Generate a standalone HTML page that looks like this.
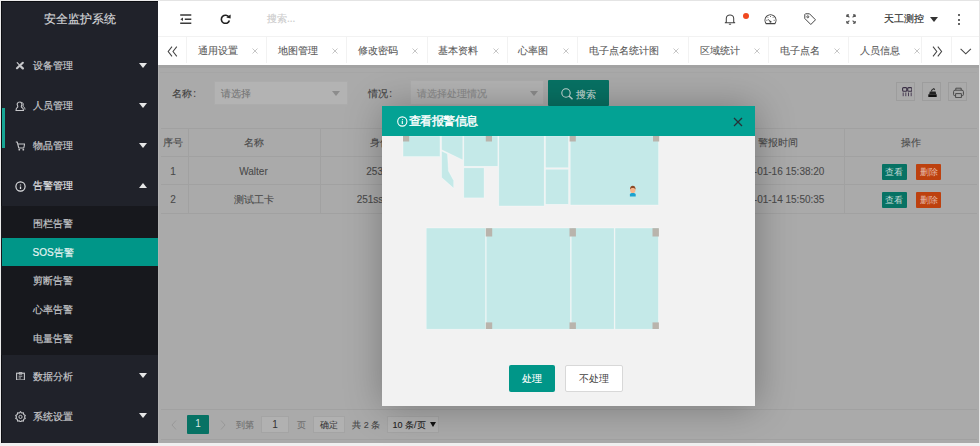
<!DOCTYPE html>
<html><head><meta charset="utf-8">
<style>
*{margin:0;padding:0;box-sizing:border-box}
html,body{width:980px;height:446px;overflow:hidden;background:#ececec;font-family:"Liberation Sans",sans-serif;position:relative}
.a{position:absolute}
.t{position:absolute;line-height:12px;white-space:nowrap}
</style></head><body>
<div class="a" style="left:1px;top:1px;width:157px;height:442px;background:#20222a"></div>
<div class="a" style="left:1px;top:1px;width:1px;height:442px;background:#0d0e12"></div>
<div class="a" style="left:1px;top:1px;width:157px;height:1px;background:#0d0e12"></div>
<span class="t" style="left:-70px;top:12.5px;width:300px;text-align:center;font-size:11.5px;color:#d4d5d8;-webkit-text-stroke:0.18px currentColor;">安全监护系统</span>
<span class="t" style="left:32.5px;top:60px;font-size:10px;color:#c6c7ca;-webkit-text-stroke:0.18px currentColor;">设备管理</span>
<span class="t" style="left:32.5px;top:100px;font-size:10px;color:#c6c7ca;-webkit-text-stroke:0.18px currentColor;">人员管理</span>
<span class="t" style="left:32.5px;top:140px;font-size:10px;color:#c6c7ca;-webkit-text-stroke:0.18px currentColor;">物品管理</span>
<span class="t" style="left:32.5px;top:180px;font-size:10px;color:#e2e3e5;-webkit-text-stroke:0.18px currentColor;">告警管理</span>
<span class="a" style="left:138.5px;top:63px;width:0;height:0;border-left:4.5px solid transparent;border-right:4.5px solid transparent;border-top:5px solid #e6e6e6"></span>
<span class="a" style="left:138.5px;top:103px;width:0;height:0;border-left:4.5px solid transparent;border-right:4.5px solid transparent;border-top:5px solid #e6e6e6"></span>
<span class="a" style="left:138.5px;top:143px;width:0;height:0;border-left:4.5px solid transparent;border-right:4.5px solid transparent;border-top:5px solid #e6e6e6"></span>
<span class="a" style="left:138.5px;top:373px;width:0;height:0;border-left:4.5px solid transparent;border-right:4.5px solid transparent;border-top:5px solid #e6e6e6"></span>
<span class="a" style="left:138.5px;top:413px;width:0;height:0;border-left:4.5px solid transparent;border-right:4.5px solid transparent;border-top:5px solid #e6e6e6"></span>
<span class="a" style="left:138.5px;top:183px;width:0;height:0;border-left:4.5px solid transparent;border-right:4.5px solid transparent;border-bottom:5px solid #e6e6e6"></span>
<svg class="a" style="left:15px;top:61px" width="10" height="9" viewBox="0 0 10 9"><path d="M2 7.2L7.8 1.8" stroke="#c6c7ca" stroke-width="2.2" stroke-linecap="round"/><path d="M2.2 1.6L4.3 3.8" stroke="#c6c7ca" stroke-width="1.2" stroke-linecap="round"/><path d="M5.6 5.2L7.8 7.4" stroke="#c6c7ca" stroke-width="2.3" stroke-linecap="round"/></svg>
<svg class="a" style="left:14.5px;top:100.5px" width="11" height="10.5" viewBox="0 0 11 10.5"><path d="M4.5 1A2.3 2.3 0 0 0 2.6 4.6C2.9 5.4 3 5.8 2.5 6.3C1.5 6.8 1 7.5 1 9.5H8.5C8.5 7.5 7.7 6.8 6.6 6.3C6.1 5.8 6.2 5.4 6.5 4.6A2.3 2.3 0 0 0 4.5 1Z" stroke="#c6c7ca" stroke-width="1.1" fill="none"/><path d="M6.3 1.4C8.3 1.4 8.8 3.5 7.8 5.2C9 5.8 9.8 6.6 10 8.6" stroke="#c6c7ca" stroke-width="1" fill="none"/></svg>
<svg class="a" style="left:14.5px;top:140.5px" width="10.5" height="10" viewBox="0 0 10.5 10"><path d="M0.8 1H2.2L3.8 7H8.8L9.6 3H3" stroke="#c6c7ca" stroke-width="1.1" fill="none" stroke-linejoin="round"/><circle cx="4.3" cy="8.7" r="0.9" fill="#c6c7ca"/><circle cx="8.3" cy="8.7" r="0.9" fill="#c6c7ca"/></svg>
<svg class="a" style="left:14.5px;top:180.8px" width="11" height="11" viewBox="0 0 11 11"><circle cx="5.5" cy="5.5" r="4.6" stroke="#e2e3e5" stroke-width="1.15" fill="none"/><path d="M5.5 3.6V4.5M5.5 5.4V7.9" stroke="#e2e3e5" stroke-width="1.3"/></svg>
<div class="a" style="left:1px;top:206px;width:157px;height:149px;background:#17181d"></div>
<div class="a" style="left:2px;top:237.7px;width:156px;height:28.6px;background:#009688"></div>
<span class="t" style="left:32.5px;top:218.2px;font-size:10px;color:#c6c7ca;-webkit-text-stroke:0.18px currentColor;">围栏告警</span>
<span class="t" style="left:32.5px;top:246.7px;font-size:10px;color:#e6f4f2;-webkit-text-stroke:0.18px currentColor;">SOS告警</span>
<span class="t" style="left:32.5px;top:275.3px;font-size:10px;color:#c6c7ca;-webkit-text-stroke:0.18px currentColor;">剪断告警</span>
<span class="t" style="left:32.5px;top:303.5px;font-size:10px;color:#c6c7ca;-webkit-text-stroke:0.18px currentColor;">心率告警</span>
<span class="t" style="left:32.5px;top:332.5px;font-size:10px;color:#c6c7ca;-webkit-text-stroke:0.18px currentColor;">电量告警</span>
<span class="t" style="left:32.5px;top:370.8px;font-size:10px;color:#c6c7ca;-webkit-text-stroke:0.18px currentColor;">数据分析</span>
<span class="t" style="left:32.5px;top:410.7px;font-size:10px;color:#c6c7ca;-webkit-text-stroke:0.18px currentColor;">系统设置</span>
<svg class="a" style="left:15.5px;top:371.8px" width="9" height="8.6" viewBox="0 0 9 8.6"><rect x="0.6" y="1.2" width="7.8" height="6.8" stroke="#c6c7ca" stroke-width="1.1" fill="none"/><path d="M3 0.6H6V2.2H3ZM2.6 4.2H6.4M2.6 6H5" stroke="#c6c7ca" stroke-width="0.9" fill="none"/></svg>
<svg class="a" style="left:14.5px;top:411px" width="11" height="11" viewBox="0 0 11 11"><path d="M5.5 0.6L6.6 2L8.4 1.7L8.7 3.5L10.3 4.4L9.5 6L10.3 7.5L8.7 8.3L8.4 10.1L6.6 9.8L5.5 11.2L4.4 9.8L2.6 10.1L2.3 8.3L0.7 7.5L1.5 6L0.7 4.4L2.3 3.5L2.6 1.7L4.4 2Z" stroke="#c6c7ca" stroke-width="1.1" fill="none" stroke-linejoin="round"/><circle cx="5.5" cy="5.9" r="1.6" stroke="#c6c7ca" stroke-width="1" fill="none"/></svg>
<div class="a" style="left:2px;top:107.8px;width:3px;height:40.2px;background:#16a594"></div>
<div class="a" style="left:158px;top:1px;width:821px;height:35px;background:#fff"></div>
<div class="a" style="left:158px;top:0px;width:821px;height:1px;background:#e4e4e4"></div>
<svg class="a" style="left:180px;top:14px" width="11.5" height="10" viewBox="0 0 11.5 10"><path d="M0.2 1H11.3M4.8 5.2H11.3M0.2 9.2H11.3" stroke="#3a3a3a" stroke-width="1.35"/><path d="M0.4 5.2L3 3.4V7Z" fill="#3a3a3a"/></svg>
<svg class="a" style="left:220px;top:14px" width="11" height="10" viewBox="0 0 11 10"><path d="M9 3.2A4.1 4.1 0 1 0 9.4 6.5" stroke="#222" stroke-width="1.6" fill="none"/><path d="M6.3 3.6L10.6 0.6V4.6Z" fill="#222"/></svg>
<span class="t" style="left:267px;top:13px;font-size:10px;color:#cdcdcd;-webkit-text-stroke:0.18px currentColor;">搜索...</span>
<svg class="a" style="left:724px;top:13px" width="12" height="12" viewBox="0 0 12 12"><path d="M2.3 9V5.6A3.7 3.7 0 0 1 9.7 5.6V9L10.8 9.8H1.2Z" stroke="#444" stroke-width="1.05" fill="none" stroke-linejoin="round"/><path d="M4.9 11.2H7.1" stroke="#444" stroke-width="1"/></svg>
<div class="a" style="left:743.4px;top:13.3px;width:6px;height:5.7px;background:#f0481f;border-radius:3px"></div>
<svg class="a" style="left:763.5px;top:14px" width="13" height="11" viewBox="0 0 13 11"><path d="M2.1 9.6A5.5 5.5 0 1 1 10.9 9.6Z" stroke="#444" stroke-width="1.05" fill="none" stroke-linejoin="round"/><path d="M6.5 7.8L4 5.2M2.4 6.3H3.3M3.6 3.2L4.2 3.8M6.5 1.9V2.8M9.4 3.2L8.8 3.8M10.6 6.3H9.7" stroke="#444" stroke-width="1"/><circle cx="6.5" cy="7.8" r="1" fill="#444"/></svg>
<svg class="a" style="left:803.5px;top:12.5px" width="12.5" height="12.5" viewBox="0 0 12.5 12.5"><path d="M0.8 1.5V5.5L6.8 11.5L11.5 6.8L5.5 0.8H1.5Z" stroke="#444" stroke-width="1" fill="none" stroke-linejoin="round"/><circle cx="3.8" cy="3.8" r="1" stroke="#444" stroke-width=".9" fill="none"/></svg>
<svg class="a" style="left:845.5px;top:14px" width="10" height="10" viewBox="0 0 10 10"><path d="M0.8 0.8L3.4 3.4M0.8 0.8V3M0.8 0.8H3M9.2 0.8L6.6 3.4M9.2 0.8V3M9.2 0.8H7M0.8 9.2L3.4 6.6M0.8 9.2V7M0.8 9.2H3M9.2 9.2L6.6 6.6M9.2 9.2V7M9.2 9.2H7" stroke="#555" stroke-width="1.15" fill="none"/></svg>
<span class="t" style="left:884.3px;top:12.5px;font-size:10.2px;color:#333;-webkit-text-stroke:0.18px currentColor;">天工测控</span>
<span class="a" style="left:929.5px;top:16.5px;width:0;height:0;border-left:4px solid transparent;border-right:4px solid transparent;border-top:5px solid #333"></span>
<div class="a" style="left:958px;top:14.3px;width:2.2px;height:2.2px;background:#333;border-radius:1px"></div>
<div class="a" style="left:958px;top:18.6px;width:2.2px;height:2.2px;background:#333;border-radius:1px"></div>
<div class="a" style="left:958px;top:22.9px;width:2.2px;height:2.2px;background:#333;border-radius:1px"></div>
<div class="a" style="left:158px;top:36px;width:821px;height:29px;background:#fff"></div>
<div class="a" style="left:158px;top:36px;width:821px;height:1px;background:#f2f2f2"></div>
<svg class="a" style="left:167px;top:45.5px" width="11" height="11" viewBox="0 0 11 11"><path d="M5 0.7L1.2 5.5L5 10.3M9.8 0.7L6 5.5L9.8 10.3" stroke="#444" stroke-width="1.05" fill="none"/></svg>
<span class="t" style="left:197.9px;top:45px;font-size:10px;color:#5a5a5a;-webkit-text-stroke:0.1px currentColor">通用设置</span>
<svg class="a" style="left:251.8px;top:48.1px" width="6" height="6" viewBox="0 0 6 6"><path d="M0.5 0.5L5.5 5.5M5.5 0.5L0.5 5.5" stroke="#c0c0c0" stroke-width="0.9"/></svg>
<span class="t" style="left:278.1px;top:45px;font-size:10px;color:#5a5a5a;-webkit-text-stroke:0.1px currentColor">地图管理</span>
<svg class="a" style="left:332px;top:48.1px" width="6" height="6" viewBox="0 0 6 6"><path d="M0.5 0.5L5.5 5.5M5.5 0.5L0.5 5.5" stroke="#c0c0c0" stroke-width="0.9"/></svg>
<span class="t" style="left:358.3px;top:45px;font-size:10px;color:#5a5a5a;-webkit-text-stroke:0.1px currentColor">修改密码</span>
<svg class="a" style="left:412.3px;top:48.1px" width="6" height="6" viewBox="0 0 6 6"><path d="M0.5 0.5L5.5 5.5M5.5 0.5L0.5 5.5" stroke="#c0c0c0" stroke-width="0.9"/></svg>
<span class="t" style="left:438.3px;top:45px;font-size:10px;color:#5a5a5a;-webkit-text-stroke:0.1px currentColor">基本资料</span>
<svg class="a" style="left:492.8px;top:48.1px" width="6" height="6" viewBox="0 0 6 6"><path d="M0.5 0.5L5.5 5.5M5.5 0.5L0.5 5.5" stroke="#c0c0c0" stroke-width="0.9"/></svg>
<span class="t" style="left:518.3px;top:45px;font-size:10px;color:#5a5a5a;-webkit-text-stroke:0.1px currentColor">心率图</span>
<svg class="a" style="left:563.1px;top:48.1px" width="6" height="6" viewBox="0 0 6 6"><path d="M0.5 0.5L5.5 5.5M5.5 0.5L0.5 5.5" stroke="#c0c0c0" stroke-width="0.9"/></svg>
<span class="t" style="left:589.1px;top:45px;font-size:10px;color:#5a5a5a;-webkit-text-stroke:0.1px currentColor">电子点名统计图</span>
<svg class="a" style="left:673.4px;top:48.1px" width="6" height="6" viewBox="0 0 6 6"><path d="M0.5 0.5L5.5 5.5M5.5 0.5L0.5 5.5" stroke="#c0c0c0" stroke-width="0.9"/></svg>
<span class="t" style="left:699.7px;top:45px;font-size:10px;color:#5a5a5a;-webkit-text-stroke:0.1px currentColor">区域统计</span>
<svg class="a" style="left:753.7px;top:48.1px" width="6" height="6" viewBox="0 0 6 6"><path d="M0.5 0.5L5.5 5.5M5.5 0.5L0.5 5.5" stroke="#c0c0c0" stroke-width="0.9"/></svg>
<span class="t" style="left:779.7px;top:45px;font-size:10px;color:#5a5a5a;-webkit-text-stroke:0.1px currentColor">电子点名</span>
<svg class="a" style="left:833.7px;top:48.1px" width="6" height="6" viewBox="0 0 6 6"><path d="M0.5 0.5L5.5 5.5M5.5 0.5L0.5 5.5" stroke="#c0c0c0" stroke-width="0.9"/></svg>
<span class="t" style="left:859.7px;top:45px;font-size:10px;color:#5a5a5a;-webkit-text-stroke:0.1px currentColor">人员信息</span>
<svg class="a" style="left:914.2px;top:48.1px" width="6" height="6" viewBox="0 0 6 6"><path d="M0.5 0.5L5.5 5.5M5.5 0.5L0.5 5.5" stroke="#c0c0c0" stroke-width="0.9"/></svg>
<div class="a" style="left:186px;top:37px;width:1px;height:26px;background:#f2f2f2"></div>
<div class="a" style="left:266px;top:37px;width:1px;height:26px;background:#f2f2f2"></div>
<div class="a" style="left:346px;top:37px;width:1px;height:26px;background:#f2f2f2"></div>
<div class="a" style="left:427px;top:37px;width:1px;height:26px;background:#f2f2f2"></div>
<div class="a" style="left:507px;top:37px;width:1px;height:26px;background:#f2f2f2"></div>
<div class="a" style="left:577px;top:37px;width:1px;height:26px;background:#f2f2f2"></div>
<div class="a" style="left:688px;top:37px;width:1px;height:26px;background:#f2f2f2"></div>
<div class="a" style="left:768px;top:37px;width:1px;height:26px;background:#f2f2f2"></div>
<div class="a" style="left:848px;top:37px;width:1px;height:26px;background:#f2f2f2"></div>
<div class="a" style="left:921px;top:37px;width:1px;height:26px;background:#f2f2f2"></div>
<div class="a" style="left:951px;top:37px;width:1px;height:26px;background:#f2f2f2"></div>
<svg class="a" style="left:932px;top:45.5px" width="10.5" height="11" viewBox="0 0 10.5 11"><path d="M1 0.7L4.8 5.5L1 10.3M5.8 0.7L9.6 5.5L5.8 10.3" stroke="#444" stroke-width="1.05" fill="none"/></svg>
<svg class="a" style="left:960px;top:47.5px" width="11.5" height="7" viewBox="0 0 11.5 7"><path d="M0.6 0.8L5.75 5.8L10.9 0.8" stroke="#444" stroke-width="1.1" fill="none"/></svg>
<div class="a" style="left:158px;top:65px;width:821px;height:378px;background:#aaaaaa"></div>
<div class="a" style="left:158px;top:65px;width:821px;height:2.5px;background:#a3a3a3"></div>
<div class="a" style="left:158px;top:65px;width:1px;height:378px;background:#b1b1b1"></div>
<div class="a" style="left:160px;top:71.5px;width:817px;height:1px;background:#a6a6a6"></div>
<span class="t" style="left:171.5px;top:88px;font-size:10px;color:#3f3f3f;-webkit-text-stroke:0.1px currentColor;">名称</span>
<span class="t" style="left:193.3px;top:88px;font-size:10px;color:#3f3f3f;-webkit-text-stroke:0.1px currentColor;">:</span>
<div class="a" style="left:213.5px;top:80.8px;width:134.5px;height:24.5px;background:#b3b3b3;border:1px solid #acacac"></div>
<span class="t" style="left:220.5px;top:88px;font-size:10px;color:#757575;-webkit-text-stroke:0.1px currentColor;">请选择</span>
<span class="a" style="left:332px;top:91px;width:0;height:0;border-left:4.5px solid transparent;border-right:4.5px solid transparent;border-top:5px solid #8c8c8c"></span>
<span class="t" style="left:367.5px;top:88px;font-size:10px;color:#3f3f3f;-webkit-text-stroke:0.1px currentColor;">情况</span>
<span class="t" style="left:389.3px;top:88px;font-size:10px;color:#3f3f3f;-webkit-text-stroke:0.1px currentColor;">:</span>
<div class="a" style="left:409.8px;top:80.3px;width:134.7px;height:24.5px;background:#b3b3b3;border:1px solid #acacac"></div>
<span class="t" style="left:416.5px;top:88px;font-size:10px;color:#8a8a8a;-webkit-text-stroke:0.1px currentColor;">请选择处理情况</span>
<span class="a" style="left:529.5px;top:91px;width:0;height:0;border-left:4.25px solid transparent;border-right:4.25px solid transparent;border-top:5px solid #8c8c8c"></span>
<div class="a" style="left:548px;top:79.7px;width:60.7px;height:26.3px;background:#077264;border-radius:1px"></div>
<svg class="a" style="left:561px;top:87.5px" width="12.5" height="12" viewBox="0 0 12.5 12"><circle cx="5" cy="5" r="4.2" stroke="#c6dad6" stroke-width="1.1" fill="none"/><path d="M8 8L11.5 11.3" stroke="#c6dad6" stroke-width="1.5"/></svg>
<span class="t" style="left:576px;top:88.5px;font-size:10px;color:#c9dcd8;-webkit-text-stroke:0.1px currentColor;">搜索</span>
<div class="a" style="left:896px;top:82.4px;width:19px;height:19px;border:1px solid #9d9d9d"></div>
<div class="a" style="left:922px;top:82.4px;width:19px;height:19px;border:1px solid #9d9d9d"></div>
<div class="a" style="left:948px;top:82.4px;width:19px;height:19px;border:1px solid #9d9d9d"></div>
<svg class="a" style="left:901.5px;top:87px" width="10.5" height="9.5" viewBox="0 0 10.5 9.5"><rect x="0.6" y="0.6" width="4.2" height="3.6" rx="1" stroke="#3a2f45" stroke-width="1.1" fill="none"/><rect x="5.7" y="0.6" width="4.2" height="3.6" rx="1" stroke="#3a2f45" stroke-width="1.1" fill="none"/><path d="M1.2 5.5V9.2M3.8 5.5V9.2M6.5 5.5V9.2M9.2 5.5V9.2" stroke="#4a3f55" stroke-width="1"/></svg>
<svg class="a" style="left:927.5px;top:87.5px" width="9" height="9" viewBox="0 0 9 9"><path d="M0.3 6.3H8.7V9H0.3Z" fill="#111"/><path d="M1.2 6.3L1.8 3.6H7.6L8.2 6.3Z" fill="#222"/><path d="M3.6 3.6V2.2L5.8 0.6L6.8 1.8" stroke="#333" stroke-width="1.1" fill="none"/></svg>
<svg class="a" style="left:952.5px;top:86.5px" width="11" height="11.5" viewBox="0 0 11 11.5"><path d="M2.8 3.2V1.2H8.2V3.2M2.6 8.6H1.6A1 1 0 0 1 0.6 7.6V4.6A1.4 1.4 0 0 1 2 3.2H9A1.4 1.4 0 0 1 10.4 4.6V7.6A1 1 0 0 1 9.4 8.6H8.4M2.6 6.6H8.4V10.6H2.6Z" stroke="#4a4a4a" stroke-width="1" fill="none"/></svg>
<div class="a" style="left:161px;top:128px;width:816px;height:1px;background:#a1a1a1"></div>
<div class="a" style="left:161px;top:156px;width:816px;height:1px;background:#a1a1a1"></div>
<div class="a" style="left:161px;top:184px;width:816px;height:1px;background:#a1a1a1"></div>
<div class="a" style="left:161px;top:212.5px;width:816px;height:1px;background:#a1a1a1"></div>
<div class="a" style="left:188px;top:128.5px;width:1px;height:84.5px;background:#a1a1a1"></div>
<div class="a" style="left:319.5px;top:128.5px;width:1px;height:84.5px;background:#a1a1a1"></div>
<div class="a" style="left:711px;top:128.5px;width:1px;height:84.5px;background:#a1a1a1"></div>
<div class="a" style="left:843.5px;top:128.5px;width:1px;height:84.5px;background:#a1a1a1"></div>
<span class="t" style="left:369.5px;top:137px;font-size:10px;color:#4a4a4a;-webkit-text-stroke:0.1px currentColor;">身份证号</span>
<span class="t" style="left:23px;top:137px;width:300px;text-align:center;font-size:10px;color:#4a4a4a;-webkit-text-stroke:0.1px currentColor;">序号</span>
<span class="t" style="left:103.5px;top:137px;width:300px;text-align:center;font-size:10px;color:#4a4a4a;-webkit-text-stroke:0.1px currentColor;">名称</span>
<span class="t" style="left:628px;top:137px;width:300px;text-align:center;font-size:10px;color:#4a4a4a;-webkit-text-stroke:0.1px currentColor;">警报时间</span>
<span class="t" style="left:761px;top:137px;width:300px;text-align:center;font-size:10px;color:#4a4a4a;-webkit-text-stroke:0.1px currentColor;">操作</span>
<span class="t" style="left:366.3px;top:166px;font-size:10px;color:#4a4a4a;-webkit-text-stroke:0.1px currentColor;">2530000000000</span>
<span class="t" style="left:23px;top:166px;width:300px;text-align:center;font-size:10px;color:#4a4a4a;-webkit-text-stroke:0.1px currentColor;">1</span>
<span class="t" style="left:103.5px;top:166px;width:300px;text-align:center;font-size:10px;color:#4a4a4a;-webkit-text-stroke:0.1px currentColor;">Walter</span>
<span class="t" style="left:628px;top:166px;width:300px;text-align:center;font-size:10px;color:#4a4a4a;-webkit-text-stroke:0.1px currentColor;">2025-01-16 15:38:20</span>
<span class="t" style="left:356.7px;top:194px;font-size:10px;color:#4a4a4a;-webkit-text-stroke:0.1px currentColor;">251ss00000000</span>
<span class="t" style="left:23px;top:194px;width:300px;text-align:center;font-size:10px;color:#4a4a4a;-webkit-text-stroke:0.1px currentColor;">2</span>
<span class="t" style="left:103.5px;top:194px;width:300px;text-align:center;font-size:10px;color:#4a4a4a;-webkit-text-stroke:0.1px currentColor;">测试工卡</span>
<span class="t" style="left:628px;top:194px;width:300px;text-align:center;font-size:10px;color:#4a4a4a;-webkit-text-stroke:0.1px currentColor;">2025-01-14 15:50:35</span>
<div class="a" style="left:881.6px;top:163.7px;width:25px;height:16px;background:#077264;border-radius:1px;color:#c6dcd8;font-size:9px;line-height:16px;text-align:center">查看</div>
<div class="a" style="left:916px;top:163.7px;width:25px;height:16px;background:#bd410f;border-radius:1px;color:#e6b9a5;font-size:9px;line-height:16px;text-align:center">删除</div>
<div class="a" style="left:881.6px;top:191.8px;width:25px;height:16px;background:#077264;border-radius:1px;color:#c6dcd8;font-size:9px;line-height:16px;text-align:center">查看</div>
<div class="a" style="left:916px;top:191.8px;width:25px;height:16px;background:#bd410f;border-radius:1px;color:#e6b9a5;font-size:9px;line-height:16px;text-align:center">删除</div>
<div class="a" style="left:161px;top:409px;width:816px;height:1px;background:#a1a1a1"></div>
<div class="a" style="left:161px;top:439px;width:816px;height:1px;background:#a1a1a1"></div>
<svg class="a" style="left:171px;top:420px" width="6" height="10" viewBox="0 0 6 10"><path d="M5 0.5L1 5L5 9.5" stroke="#999" stroke-width="1" fill="none"/></svg>
<div class="a" style="left:187px;top:415.2px;width:22px;height:18.4px;background:#077264;border-radius:1px;color:#d8e8e5;font-size:10px;line-height:18px;text-align:center">1</div>
<svg class="a" style="left:220px;top:420px" width="6" height="10" viewBox="0 0 6 10"><path d="M1 0.5L5 5L1 9.5" stroke="#999" stroke-width="1" fill="none"/></svg>
<span class="t" style="left:236px;top:419px;font-size:9px;color:#707070;-webkit-text-stroke:0.1px currentColor;">到第</span>
<div class="a" style="left:261px;top:415.7px;width:28px;height:17.6px;background:#b1b1b1;border:1px solid #a4a4a4;color:#333;font-size:10px;line-height:16px;text-align:center">1</div>
<span class="t" style="left:296.5px;top:419px;font-size:9px;color:#707070;-webkit-text-stroke:0.1px currentColor;">页</span>
<div class="a" style="left:313px;top:415.7px;width:31.5px;height:17.6px;background:#b1b1b1;border:1px solid #a4a4a4;color:#333;font-size:9px;line-height:16px;text-align:center">确定</div>
<span class="t" style="left:352.3px;top:419px;font-size:9px;color:#444;-webkit-text-stroke:0.1px currentColor;">共 2 条</span>
<div class="a" style="left:387px;top:415.7px;width:52px;height:17.6px;background:#b1b1b1;border:1px solid #a4a4a4"></div>
<span class="t" style="left:392.5px;top:419px;font-size:9px;color:#222;-webkit-text-stroke:0.1px currentColor;">10 条/页</span>
<span class="a" style="left:430px;top:421.8px;width:0;height:0;border-left:3.2px solid transparent;border-right:3.2px solid transparent;border-top:5.2px solid #111"></span>
<div class="a" style="left:979px;top:0px;width:1px;height:446px;background:#e6e6e6"></div>
<div class="a" style="left:0px;top:443px;width:980px;height:3px;background:#f0f0f0"></div>
<div class="a" style="left:382px;top:106px;width:373px;height:300px;background:#f2f2f2;box-shadow:1px 1px 36px rgba(0,0,0,.3)"></div>
<svg class="a" style="left:0;top:0" width="980" height="446"><rect x="403" y="136" width="37" height="20.6" fill="#c4e9e8" stroke="rgba(255,255,255,.55)" stroke-width=".6"/><polygon points="441.6,136 462.8,136 462.8,160 441.6,149.8" fill="#c4e9e8" stroke="rgba(255,255,255,.55)" stroke-width=".6"/><polygon points="441.6,151 447.5,153.8 448.5,171 453.7,180.5 453.7,188.3 441.6,177.5" fill="#c4e9e8" stroke="rgba(255,255,255,.55)" stroke-width=".6"/><rect x="463.8" y="136" width="34.1" height="30.3" fill="#c4e9e8" stroke="rgba(255,255,255,.55)" stroke-width=".6"/><rect x="463.8" y="167.8" width="20.3" height="30.1" fill="#c4e9e8" stroke="rgba(255,255,255,.55)" stroke-width=".6"/><rect x="498.8" y="136" width="45.4" height="70" fill="#c4e9e8" stroke="rgba(255,255,255,.55)" stroke-width=".6"/><rect x="545.4" y="136" width="23.2" height="31.8" fill="#c4e9e8" stroke="rgba(255,255,255,.55)" stroke-width=".6"/><rect x="545.4" y="169.2" width="23.2" height="35.1" fill="#c4e9e8" stroke="rgba(255,255,255,.55)" stroke-width=".6"/><rect x="570.2" y="136" width="88.4" height="69" fill="#c4e9e8" stroke="rgba(255,255,255,.55)" stroke-width=".6"/><rect x="426.2" y="228" width="59.4" height="101.2" fill="#c4e9e8" stroke="rgba(255,255,255,.55)" stroke-width=".6"/><rect x="486.2" y="228" width="84.2" height="101.2" fill="#c4e9e8" stroke="rgba(255,255,255,.55)" stroke-width=".6"/><rect x="571.2" y="228" width="43" height="101.2" fill="#c4e9e8" stroke="rgba(255,255,255,.55)" stroke-width=".6"/><rect x="615" y="228" width="43.4" height="101.2" fill="#c4e9e8" stroke="rgba(255,255,255,.55)" stroke-width=".6"/><rect x="403" y="136" width="6.2" height="5.5" fill="#b9b4ac"/><rect x="485.8" y="136" width="6.2" height="5.5" fill="#b9b4ac"/><rect x="569.6" y="136" width="6.2" height="5.5" fill="#b9b4ac"/><rect x="653" y="136" width="6.2" height="5.5" fill="#b9b4ac"/><rect x="485.8" y="228.2" width="6.4" height="8.3" fill="#b9b4ac"/><rect x="485.8" y="322.4" width="6.4" height="6.6" fill="#b9b4ac"/><rect x="569.5" y="228.2" width="6.4" height="8.3" fill="#b9b4ac"/><rect x="569.5" y="322.4" width="6.4" height="6.6" fill="#b9b4ac"/><rect x="652.5" y="228.2" width="6.4" height="8.3" fill="#b9b4ac"/><rect x="652.5" y="322.4" width="6.4" height="6.6" fill="#b9b4ac"/><path d="M629.9 196.4V194.6C629.9 193.6 630.9 193.1 632.8 193.1S635.7 193.6 635.7 194.6V196.4Z" fill="#1ba3cf"/><ellipse cx="632.8" cy="189.7" rx="2.7" ry="3.4" fill="#f7b48a"/><path d="M630.1 189.6C629.9 187.2 631 185.8 632.8 185.8S635.7 187.2 635.5 189.6C635 188.3 634 187.9 632.8 187.9S630.6 188.3 630.1 189.6Z" fill="#8b4b28"/></svg>
<div class="a" style="left:382px;top:106px;width:373px;height:30px;background:#03a294"></div>
<svg class="a" style="left:397px;top:115.5px" width="11" height="11" viewBox="0 0 11 11"><circle cx="5.3" cy="5.5" r="4.6" stroke="#fff" stroke-width="1.1" fill="none"/><path d="M5.5 3.2V4M5.3 4.8V8" stroke="#fff" stroke-width="1.1"/></svg>
<span class="t" style="left:408.5px;top:114px;font-size:11.5px;color:#fff;-webkit-text-stroke:0.4px #fff;line-height:14px;letter-spacing:-0.5px">查看报警信息</span>
<svg class="a" style="left:733px;top:116.5px" width="10" height="10" viewBox="0 0 10 10"><path d="M1 1L9 9M9 1L1 9" stroke="#263238" stroke-width="1.3"/></svg>
<div class="a" style="left:509.3px;top:365px;width:45.7px;height:27px;background:#009688;border-radius:2px;color:#fff;font-size:10px;line-height:28px;text-align:center;-webkit-text-stroke:0.1px #fff">处理</div>
<div class="a" style="left:565.3px;top:365px;width:57.3px;height:27px;background:#fff;border:1px solid #d8d8d8;border-radius:2px;color:#444;font-size:10px;line-height:26px;text-align:center;-webkit-text-stroke:0px #444">不处理</div>
</body></html>
